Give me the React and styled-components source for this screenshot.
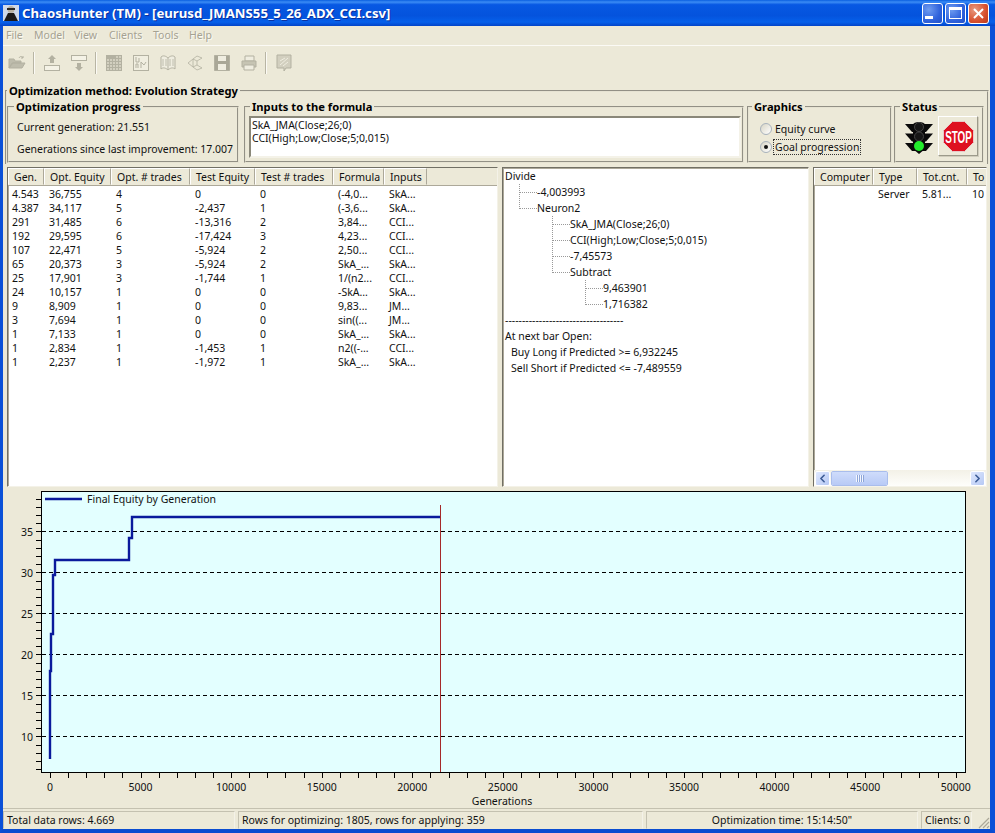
import styled, { createGlobalStyle } from "styled-components";
import { ChevronLeft, ChevronRight } from "lucide-react";

const GlobalStyle = createGlobalStyle`
  html, body {
    margin: 0;
    padding: 0;
    background: #ece9d8;
  }
  * {
    box-sizing: border-box;
  }
`;

const uiFont = `"Noto Sans", "DejaVu Sans", sans-serif`;

const Window = styled.div`
  width: 995px;
  height: 833px;
  display: flex;
  flex-direction: column;
  overflow: hidden;
  font-family: ${uiFont};
  font-size: 10.5px;
  color: #111;
  background: #ece9d8;
`;

const TitleBar = styled.div`
  height: 26px;
  flex: none;
  display: flex;
  align-items: center;
  padding: 0 6px 0 3px;
  background: linear-gradient(180deg, #0a5fe0 0%, #3b8cf5 8%, #0758e3 18%, #0453dd 60%, #0660ea 85%, #0344c8 100%);
`;

const AppIcon = styled.svg`
  width: 16px;
  height: 16px;
  flex: none;
  margin-right: 3px;
`;

const TitleText = styled.div`
  flex: 1;
  font-size: 13.2px;
  font-weight: 700;
  color: #fff;
  text-shadow: 1px 1px 0 #0a2f9c;
  white-space: nowrap;
`;

const WinButton = styled.div`
  width: 21px;
  height: 21px;
  margin-left: 2px;
  border: 1px solid #fff;
  border-radius: 3px;
  display: flex;
  align-items: center;
  justify-content: center;
  background: ${(p) =>
    p.$close
      ? "radial-gradient(circle at 30% 30%, #e89a80, #d8512f 60%, #b93a1c)"
      : "radial-gradient(circle at 30% 30%, #6f9cf0, #2f62dc 60%, #2250c8)"};
`;

const MinGlyph = styled.span`
  width: 8px;
  height: 3px;
  margin: 9px 7px 0 0;
  background: #fff;
`;

const MaxGlyph = styled.span`
  width: 13px;
  height: 12px;
  border: 1px solid #fff;
  border-top-width: 3px;
`;

const Body = styled.div`
  flex: 1;
  min-height: 0;
  display: flex;
  flex-direction: column;
  border-left: 3px solid #0a50d8;
  border-right: 5px solid #0a50d8;
  border-bottom: 4px solid #0a4cd0;
`;

const MenuBar = styled.div`
  height: 20px;
  flex: none;
  display: flex;
  align-items: center;
  padding: 0 0 2px 3px;
  border-bottom: 1px solid #fbfaf5;
`;

const MenuItem = styled.span`
  width: ${(p) => p.$w}px;
  color: #a5a292;
  text-shadow: 1px 1px 0 #faf9f2;
`;

const Toolbar = styled.div`
  height: 33px;
  flex: none;
  display: flex;
  align-items: center;
`;

const ToolSlot = styled.div`
  width: 27px;
  height: 22px;
  display: flex;
  align-items: center;
  justify-content: center;
`;

const ToolSep = styled.div`
  width: 2px;
  height: 22px;
  margin: 0 3px;
  background: #b8b5a4;
  border-right: 1px solid #fbfaf5;
`;

const Group = styled.fieldset`
  min-width: 0;
  margin: 0;
  padding: 0;
  border: 2px groove #e6e3d2;
`;

const GroupTitle = styled.legend`
  padding: 0 2px;
  margin-left: ${(p) => p.$ml ?? 5}px;
  font-weight: 700;
  font-size: 11.2px;
  line-height: 14px;
  color: #000;
`;

const MethodGroup = styled(Group)`
  flex: none;
  height: 80px;
  margin: 5px 1px 0 2px;
  border-bottom: none;
`;

const MethodRow = styled.div`
  display: flex;
  padding: 2px 3px 0 0;
  height: 63px;
`;

const SubGroup = styled(Group)`
  width: ${(p) => p.$w}px;
  margin-left: ${(p) => p.$ml || 0}px;
  flex: none;
  height: 63px;
`;

const ProgressLines = styled.div`
  padding: 2px 0 0 8px;
`;

const ProgressLine = styled.div`
  line-height: 22px;
  white-space: nowrap;
`;

const FormulaBox = styled.div`
  margin: 2px 1px 0 3px;
  height: 42px;
  padding: 1px 1px;
  background: #fff;
  border: 2px solid;
  border-color: #8a887a #f4f2e8 #f4f2e8 #8a887a;
  line-height: 13px;
`;

const RadioRows = styled.div`
  padding-top: 6px;
`;

const RadioRow = styled.div`
  display: flex;
  align-items: center;
  gap: 2px;
  height: 18px;
  padding-left: 11px;
`;

const Radio = styled.span`
  width: 12px;
  height: 12px;
  flex: none;
  border-radius: 50%;
  display: flex;
  align-items: center;
  justify-content: center;
  background: linear-gradient(135deg, #d8d5c5, #fff);
  border: 1px solid #a8b2bc;

  &::after {
    content: "";
    width: 4px;
    height: 4px;
    border-radius: 50%;
    background: ${(p) => (p.$on ? "#111" : "transparent")};
  }
`;

const RadioLabel = styled.span`
  padding: 0 1px;
  outline: ${(p) => (p.$focus ? "1px dotted #333" : "none")};
`;

const StatusRow = styled.div`
  display: flex;
  align-items: center;
  justify-content: space-between;
  padding: 1px 4px 0 9px;
  height: 43px;
`;

const LightSlot = styled.div`
  margin-top: 3px;
  display: flex;
`;

const StopButton = styled.div`
  width: 40px;
  height: 40px;
  display: flex;
  align-items: center;
  justify-content: center;
  border: 1px solid;
  border-color: #fff #9c9a8a #9c9a8a #fff;
  box-shadow: 1px 1px 0 #d0cdbc;
`;

const Panels = styled.div`
  height: 320px;
  flex: none;
  margin-top: 3px;
  display: flex;
  padding: 0 3px 0 4px;
  gap: 4px;
`;

const Panel = styled.div`
  width: ${(p) => p.$w}px;
  flex: none;
  display: flex;
  flex-direction: column;
  background: #fff;
  overflow: hidden;
  border: 1px solid;
  border-color: #716f64 #f4f2e8 #f4f2e8 #716f64;
  box-shadow: inset 1px 1px 0 #aca899;
`;

const HeaderRow = styled.div`
  height: 18px;
  flex: none;
  display: grid;
  grid-template-columns: ${(p) => p.$cols};
  background: #ece9d8;
  border-bottom: 1px solid #aca899;
`;

const HeaderCell = styled.div`
  padding-left: 5px;
  line-height: 16px;
  white-space: nowrap;
  overflow: hidden;
  border: 1px solid;
  border-color: #fff #aca899 transparent #fff;
`;

const ListBody = styled.div`
  flex: 1;
  min-height: 0;
  padding-top: 1px;
`;

const Row = styled.div`
  height: 14px;
  display: grid;
  grid-template-columns: ${(p) => p.$cols};
  line-height: 14px;
`;

const Cell = styled.div`
  padding-left: 5px;
  white-space: nowrap;
  overflow: hidden;

  &:first-child {
    padding-left: 4px;
  }
`;

const TreePanelBody = styled.div`
  padding: 0 0 0 2px;
`;

const TreeLine = styled.div`
  position: relative;
  height: 16px;
  line-height: 16px;
  white-space: nowrap;
  padding-left: ${(p) => (p.$level ? p.$level * 33 - 1 : p.$pad || 0)}px;

  &::before {
    content: "";
    display: ${(p) => (p.$level ? "block" : "none")};
    position: absolute;
    left: ${(p) => (p.$level || 0) * 33 - 19}px;
    top: ${(p) => (p.$first ? 0 : -8)}px;
    width: 17px;
    height: ${(p) => (p.$first ? 8 : 16)}px;
    border-left: 1px dotted #999;
    border-bottom: 1px dotted #999;
  }
`;

const ClientRows = styled.div`
  padding-top: 1px;
`;

const ScrollTrack = styled.div`
  height: 16px;
  flex: none;
  display: flex;
  justify-content: space-between;
  align-items: center;
  padding: 0 1px;
  margin-top: auto;
  background: linear-gradient(180deg, #f3f1e7, #fefefb);
`;

const ScrollLeftSide = styled.div`
  display: flex;
  gap: 1px;
`;

const ScrollBtn = styled.div`
  width: 15px;
  height: 15px;
  display: flex;
  align-items: center;
  justify-content: center;
  color: #3d5c96;
  border: 1px solid #fff;
  border-radius: 2px;
  background: linear-gradient(135deg, #dfe8fd, #b6c9f5);
`;

const ScrollThumb = styled.div`
  width: 57px;
  height: 15px;
  display: flex;
  align-items: center;
  justify-content: center;
  border: 1px solid #fff;
  border-radius: 2px;
  background: linear-gradient(180deg, #cfdcfb, #b8caf6);
  outline: 1px solid #a9bdec;
  outline-offset: -1px;
`;

const ThumbGrip = styled.span`
  width: 8px;
  height: 7px;
  background: repeating-linear-gradient(90deg, #f4f7ff 0 1px, #8ea6d8 1px 2px);
`;

const ChartArea = styled.div`
  flex: 1;
  min-height: 0;
`;

const ChartSvg = styled.svg`
  display: block;
  width: 987px;
  height: 322px;
  font-family: ${uiFont};
  font-size: 10.5px;
`;

const StatusBar = styled.div`
  height: 21px;
  flex: none;
  display: flex;
  gap: 3px;
  padding: 2px 0 0 0;
  border-top: 1px solid #c4c1b0;
`;

const StatusCell = styled.div`
  width: ${(p) => p.$w}px;
  flex: none;
  padding: 0 3px;
  line-height: 17px;
  white-space: nowrap;
  text-align: ${(p) => p.$align || "left"};
  border: 1px solid;
  border-color: #c4c1b0 #f4f2e8 transparent #c4c1b0;
`;

const Grip = styled.svg`
  margin-left: auto;
  width: 14px;
  height: 14px;
  align-self: flex-end;
`;

const listCols = "36px 67px 79px 65px 78px 51px 43px 1fr";
const clientCols = "59px 44px 50px 30px";

const listHeaders = ["Gen.", "Opt. Equity", "Opt. # trades", "Test Equity", "Test # trades", "Formula", "Inputs"];

const listRows = [
  ["4.543", "36,755", "4", "0", "0", "(-4,0...", "SkA..."],
  ["4.387", "34,117", "5", "-2,437", "1", "(-3,6...", "SkA..."],
  ["291", "31,485", "6", "-13,316", "2", "3,84...", "CCI..."],
  ["192", "29,595", "6", "-17,424", "3", "4,23...", "CCI..."],
  ["107", "22,471", "5", "-5,924", "2", "2,50...", "CCI..."],
  ["65", "20,373", "3", "-5,924", "2", "SkA_...", "SkA..."],
  ["25", "17,901", "3", "-1,744", "1", "1/(n2...", "CCI..."],
  ["24", "10,157", "1", "0", "0", "-SkA...", "SkA..."],
  ["9", "8,909", "1", "0", "0", "9,83...", "JM..."],
  ["3", "7,694", "1", "0", "0", "sin((...", "JM..."],
  ["1", "7,133", "1", "0", "0", "SkA_...", "SkA..."],
  ["1", "2,834", "1", "-1,453", "1", "n2((-...", "CCI..."],
  ["1", "2,237", "1", "-1,972", "1", "SkA_...", "SkA..."],
];

const treeLines = [
  { text: "Divide" },
  { text: "-4,003993", level: 1, first: true },
  { text: "Neuron2", level: 1 },
  { text: "SkA_JMA(Close;26;0)", level: 2, first: true },
  { text: "CCI(High;Low;Close;5;0,015)", level: 2 },
  { text: "-7,45573", level: 2 },
  { text: "Subtract", level: 2 },
  { text: "9,463901", level: 3, first: true },
  { text: "1,716382", level: 3 },
  { text: "-----------------------------------" },
  { text: "At next bar Open:" },
  { text: "Buy Long if Predicted >= 6,932245", pad: 6 },
  { text: "Sell Short if Predicted <= -7,489559", pad: 6 },
];

const range = (from, to, step) => {
  const out = [];
  for (let v = from; v <= to; v += step) out.push(v);
  return out;
};

const xPos = (v) => 50 + v * 0.018114;
const yPos = (v) => 736.3 - (v - 10) * 8.2;

const equityLine = "M50 759V671H51V634H53V575H55V560H129V538H132V517H440";

const GoalChart = () => (
  <ChartSvg viewBox="3 487 987 322">
    <rect x="41.5" y="491.5" width="924" height="281" fill="#e3ffff" stroke="#000" />
    {range(10, 35, 5).map((v) => (
      <line
        key={v}
        x1="42"
        x2="965"
        y1={Math.round(yPos(v)) + 0.5}
        y2={Math.round(yPos(v)) + 0.5}
        stroke="#000"
        strokeDasharray="4 3"
      />
    ))}
    {range(6, 39, 1).map((v) => (
      <line key={v} x1="36" x2="41" y1={Math.round(yPos(v)) + 0.5} y2={Math.round(yPos(v)) + 0.5} stroke="#000" />
    ))}
    {range(10, 35, 5).map((v) => (
      <text key={v} x="33" y={yPos(v) + 5} textAnchor="end" fill="#111">
        {v}
      </text>
    ))}
    {range(0, 50000, 1000).map((v) => (
      <line key={v} x1={Math.round(xPos(v)) + 0.5} x2={Math.round(xPos(v)) + 0.5} y1="773" y2="778" stroke="#000" />
    ))}
    {range(0, 50000, 5000).map((v) => (
      <text key={v} x={xPos(v)} y="791" textAnchor="middle" fill="#111">
        {v}
      </text>
    ))}
    <text x="502" y="805" textAnchor="middle" fill="#111">
      Generations
    </text>
    <line x1="440.5" x2="440.5" y1="505" y2="772" stroke="#a52a2a" />
    <path d={equityLine} fill="none" stroke="#0a1a9c" strokeWidth="2.4" />
    <line x1="45" x2="82" y1="499" y2="499" stroke="#0a1a9c" strokeWidth="2.4" />
    <text x="87" y="503" fill="#111">
      Final Equity by Generation
    </text>
  </ChartSvg>
);

const ToolIcon = ({ children }) => (
  <svg width="20" height="20" viewBox="0 0 20 20" fill="none" stroke="#b3b1a1" strokeWidth="1">
    {children}
  </svg>
);

const gridLines = [5, 8, 11, 14];
const lampRows = [6, 15.5, 25];

const TrafficLight = () => (
  <svg width="28" height="33" viewBox="0 0 28 33">
    {lampRows.map((y) => (
      <path key={y} d={`M0 ${y - 3}H28L21 ${y + 5}H7Z`} fill="#0a0a0a" />
    ))}
    <path d="M8 4C8 0 20 0 20 4V28L14 33L8 28Z" fill="#0a0a0a" />
    <circle cx="14" cy="6" r="4.5" fill="#161616" stroke="#444" />
    <circle cx="14" cy="15.5" r="4.5" fill="#161616" stroke="#444" />
    <circle cx="14" cy="25" r="5" fill="#22ec2c" />
  </svg>
);

const StopSign = () => (
  <svg width="31" height="31" viewBox="0 0 31 31">
    <path d="M9.5 0.5H21.5L30.5 9.5V21.5L21.5 30.5H9.5L0.5 21.5V9.5Z" fill="#de1020" stroke="#e8c8c8" />
    <text
      transform="translate(15.5 21.5) scale(0.58 1)"
      textAnchor="middle"
      fill="#fff"
      fontFamily="'Liberation Sans', sans-serif"
      fontWeight="700"
      fontSize="17"
    >
      STOP
    </text>
  </svg>
);

const App = () => (
  <Window>
    <GlobalStyle />
    <TitleBar>
      <AppIcon viewBox="0 0 16 16">
        <rect width="16" height="16" fill="#cfd9ea" />
        <path d="M5 8L11 8L15 16H1Z" fill="#1c1a1a" />
        <circle cx="8" cy="4.5" r="3.5" fill="#b9b2a4" />
        <path d="M4 3H12V5H4Z" fill="#2a2826" />
      </AppIcon>
      <TitleText>ChaosHunter (TM) - [eurusd_JMANS55_5_26_ADX_CCI.csv]</TitleText>
      <WinButton>
        <MinGlyph />
      </WinButton>
      <WinButton>
        <MaxGlyph />
      </WinButton>
      <WinButton $close>
        <svg width="13" height="13" viewBox="0 0 13 13">
          <path d="M2 2L11 11M11 2L2 11" stroke="#fff" strokeWidth="2" />
        </svg>
      </WinButton>
    </TitleBar>
    <Body>
      <MenuBar>
        <MenuItem $w={28}>File</MenuItem>
        <MenuItem $w={40}>Model</MenuItem>
        <MenuItem $w={35}>View</MenuItem>
        <MenuItem $w={44}>Clients</MenuItem>
        <MenuItem $w={36}>Tools</MenuItem>
        <MenuItem $w={30}>Help</MenuItem>
      </MenuBar>
      <Toolbar>
        <ToolSlot>
          <ToolIcon>
            <path d="M2 15V6H7L8 8H14V10H6L2 15L5 10H18L15 15Z" fill="#bebcac" />
            <path d="M12 5C13 3 15 3 16 5M16 5V3M16 5H14" />
          </ToolIcon>
        </ToolSlot>
        <ToolSep />
        <ToolSlot>
          <ToolIcon>
            <path d="M10 2L14 6H12V10H8V6H6Z" fill="#b3b1a1" stroke="none" />
            <rect x="2.5" y="12.5" width="15" height="5" fill="#f4f2e6" />
          </ToolIcon>
        </ToolSlot>
        <ToolSlot>
          <ToolIcon>
            <rect x="2.5" y="2.5" width="15" height="5" fill="#f4f2e6" />
            <path d="M10 18L14 14H12V10H8V14H6Z" fill="#b3b1a1" stroke="none" />
          </ToolIcon>
        </ToolSlot>
        <ToolSep />
        <ToolSlot>
          <ToolIcon>
            <rect x="2.5" y="2.5" width="15" height="15" fill="#d2cfbf" />
            <path d="M2.5 2.5H11V6H2.5Z" fill="#b3b1a1" stroke="none" />
            {gridLines.map((g) => (
              <path key={g} d={`M${g + 0.5} 3V17M3 ${g + 0.5}H17`} />
            ))}
          </ToolIcon>
        </ToolSlot>
        <ToolSlot>
          <ToolIcon>
            <rect x="2.5" y="2.5" width="15" height="15" fill="#f0eee0" />
            <path d="M5 4V9H8V5M5 15V11H7V15M10 15V9L13 12L15 9" />
          </ToolIcon>
        </ToolSlot>
        <ToolSlot>
          <ToolIcon>
            <path d="M3 4C5 2 8 3 10 5C12 3 15 2 17 4V16C15 14 12 15 10 17C8 15 5 14 3 16ZM10 5V17" fill="#efede0" />
            <path d="M5 6V13M8 6V13M12 6V13M15 6V13" strokeWidth="0.8" />
          </ToolIcon>
        </ToolSlot>
        <ToolSlot>
          <ToolIcon>
            <path d="M3 10L8 6L12 3M3 10L8 14L12 17M8 6L12 8L17 5M8 14L12 12L17 15M8 6V14M12 8V12M12 3L17 5M12 17L17 15" strokeWidth="0.8" />
          </ToolIcon>
        </ToolSlot>
        <ToolSlot>
          <ToolIcon>
            <path d="M2.5 2.5H17.5V17.5H2.5Z" fill="#a9a797" />
            <rect x="6" y="3" width="8" height="5" fill="#efede0" stroke="none" />
            <rect x="6" y="11" width="8" height="6" fill="#efede0" stroke="none" />
          </ToolIcon>
        </ToolSlot>
        <ToolSlot>
          <ToolIcon>
            <path d="M6 3H15V8H6Z" fill="#efede0" />
            <path d="M3 8H17V14H3Z" fill="#c6c4b3" />
            <path d="M5 12H15V17H5Z" fill="#efede0" />
          </ToolIcon>
        </ToolSlot>
        <ToolSep />
        <ToolSlot>
          <ToolIcon>
            <path d="M3 2H17V15H12L10 18V15H3Z" fill="#d2cfbf" />
            <path d="M6 12L14 5M6 8L11 5M9 13L14 9" stroke="#efede0" />
          </ToolIcon>
        </ToolSlot>
      </Toolbar>
      <MethodGroup>
        <GroupTitle $ml={0}>Optimization method: Evolution Strategy</GroupTitle>
        <MethodRow>
          <SubGroup $w={232}>
            <GroupTitle>Optimization progress</GroupTitle>
            <ProgressLines>
              <ProgressLine>Current generation: 21.551</ProgressLine>
              <ProgressLine>Generations since last improvement: 17.007</ProgressLine>
            </ProgressLines>
          </SubGroup>
          <SubGroup $w={500} $ml={5}>
            <GroupTitle $ml={4}>Inputs to the formula</GroupTitle>
            <FormulaBox>
              SkA_JMA(Close;26;0)
              <br />
              CCI(High;Low;Close;5;0,015)
            </FormulaBox>
          </SubGroup>
          <SubGroup $w={145} $ml={3}>
            <GroupTitle $ml={3}>Graphics</GroupTitle>
            <RadioRows>
              <RadioRow>
                <Radio />
                <RadioLabel>Equity curve</RadioLabel>
              </RadioRow>
              <RadioRow>
                <Radio $on />
                <RadioLabel $focus>Goal progression</RadioLabel>
              </RadioRow>
            </RadioRows>
          </SubGroup>
          <SubGroup $w={90} $ml={2}>
            <GroupTitle $ml={4}>Status</GroupTitle>
            <StatusRow>
              <LightSlot>
                <TrafficLight />
              </LightSlot>
              <StopButton>
                <StopSign />
              </StopButton>
            </StatusRow>
          </SubGroup>
        </MethodRow>
      </MethodGroup>
      <Panels>
        <Panel $w={491}>
          <HeaderRow $cols={listCols}>
            {listHeaders.map((h) => (
              <HeaderCell key={h}>{h}</HeaderCell>
            ))}
          </HeaderRow>
          <ListBody>
            {listRows.map((row, i) => (
              <Row key={i} $cols={listCols}>
                {row.map((c, j) => (
                  <Cell key={j}>{c}</Cell>
                ))}
              </Row>
            ))}
          </ListBody>
        </Panel>
        <Panel $w={307}>
          <TreePanelBody>
            {treeLines.map((l) => (
              <TreeLine key={l.text} $level={l.level} $first={l.first} $pad={l.pad}>
                {l.text}
              </TreeLine>
            ))}
          </TreePanelBody>
        </Panel>
        <Panel $w={174}>
          <HeaderRow $cols={clientCols}>
            <HeaderCell>Computer</HeaderCell>
            <HeaderCell>Type</HeaderCell>
            <HeaderCell>Tot.cnt.</HeaderCell>
            <HeaderCell>To</HeaderCell>
          </HeaderRow>
          <ClientRows>
            <Row $cols={clientCols}>
              <Cell />
              <Cell>Server</Cell>
              <Cell>5.81...</Cell>
              <Cell>10</Cell>
            </Row>
          </ClientRows>
          <ScrollTrack>
            <ScrollLeftSide>
              <ScrollBtn>
                <ChevronLeft size={13} strokeWidth={3} />
              </ScrollBtn>
              <ScrollThumb>
                <ThumbGrip />
              </ScrollThumb>
            </ScrollLeftSide>
            <ScrollBtn>
              <ChevronRight size={13} strokeWidth={3} />
            </ScrollBtn>
          </ScrollTrack>
        </Panel>
      </Panels>
      <ChartArea>
        <GoalChart />
      </ChartArea>
      <StatusBar>
        <StatusCell $w={232}>Total data rows: 4.669</StatusCell>
        <StatusCell $w={405}>Rows for optimizing: 1805, rows for applying: 359</StatusCell>
        <StatusCell $w={272} $align="center">
          Optimization time: 15:14:50"
        </StatusCell>
        <StatusCell $w={51}>Clients: 0</StatusCell>
        <Grip viewBox="0 0 14 14">
          <path d="M13 3L3 13M13 7L7 13M13 11L11 13" stroke="#aca899" strokeWidth="1.2" />
        </Grip>
      </StatusBar>
    </Body>
  </Window>
);

export default App;
